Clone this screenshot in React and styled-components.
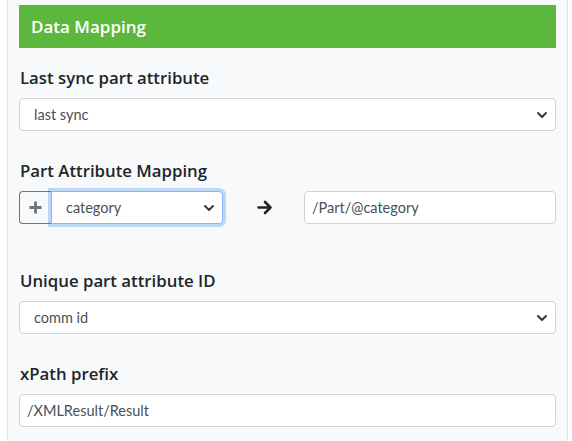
import React from 'react'
import styled, { createGlobalStyle } from 'styled-components'

const GlobalStyle = createGlobalStyle`
body {
  margin: 0;
  background: #ffffff;
  font-family: Lato, "Noto Sans", sans-serif;
  color: #212529;
}
`;

const Card = styled.div`
margin: -1px 0 0 7px;
width: 561px;
min-height: 460px;
box-sizing: border-box;
padding: 5px 11px 0 11px;
background: #f8f9fa;
border: 1px solid #dee2e6;
`;

const Header = styled.div`
height: 43px;
background: #5cb83d;
color: #ffffff;
display: flex;
align-items: center;
padding: 0 12px;
font-family: "Open Sans", sans-serif;
font-size: 17px;
font-weight: 600;
margin-bottom: 18px;
`;

const Group = styled.div`
margin-bottom: ${props => props.gap || 28}px;
`;

const Label = styled.div`
font-family: "Open Sans", sans-serif;
font-size: 16.8px;
font-weight: 600;
line-height: 24px;
margin-bottom: 8px;
padding-left: 1px;
`;

const SelectBox = styled.div`
position: relative;
height: 33px;
box-sizing: border-box;
display: flex;
align-items: center;
padding: 0 14px;
background: #ffffff;
border: 1px solid ${props => props.focused ? '#86b7fe' : '#ced4da'};
border-radius: ${props => props.joined ? '0 4px 4px 0' : '4px'};
box-shadow: ${props => props.focused ? '0 0 0 3px rgba(13,110,253,0.25)' : 'none'};
font-size: 14.5px;
color: #495057;
flex: 1;
`;

const Chevron = styled.svg`
position: absolute;
right: 7px;
top: 50%;
margin-top: -5px;
`;

const TextInput = styled.div`
height: 33px;
box-sizing: border-box;
display: flex;
align-items: center;
padding: 0 7px;
background: #ffffff;
border: 1px solid #ced4da;
border-radius: 4px;
font-size: 14.5px;
color: #495057;
`;

const MapRow = styled.div`
display: grid;
grid-template-columns: 204px 1fr 252px;
align-items: center;
`;

const InputGroup = styled.div`
display: flex;
height: 33px;
`;

const AddButton = styled.div`
width: 32px;
box-sizing: border-box;
display: flex;
align-items: center;
justify-content: center;
border: 1px solid #6c757d;
border-right: none;
border-radius: 4px 0 0 4px;
`;

const ArrowCell = styled.div`
display: flex;
justify-content: center;
padding-left: 2px;
`;

function Select({ value, focused, joined }) {
    return (
        <SelectBox focused={focused} joined={joined}>
            {value}
            <Chevron width="12" height="10" viewBox="0 0 12 10">
                <path d="M2 3 L6 7 L10 3" fill="none" stroke="#343a40" strokeWidth="2" strokeLinecap="round" strokeLinejoin="round" />
            </Chevron>
        </SelectBox>
    )
}

export default function App() {
    return (
        <>
            <GlobalStyle />
            <Card>
                <Header>Data Mapping</Header>
                <Group>
                    <Label>Last sync part attribute</Label>
                    <Select value="last sync" />
                </Group>
                <Group gap={45}>
                    <Label>Part Attribute Mapping</Label>
                    <MapRow>
                        <InputGroup>
                            <AddButton>
                                <svg width="15" height="15" viewBox="0 0 15 15">
                                    <path d="M7.5 1.5 V13.5 M1.5 7.5 H13.5" stroke="#6c757d" strokeWidth="2.8" />
                                </svg>
                            </AddButton>
                            <Select value="category" focused joined />
                        </InputGroup>
                        <ArrowCell>
                            <svg width="16" height="15" viewBox="0 0 16 15">
                                <path d="M1.5 7.5 H13.5 M8 2 L13.5 7.5 L8 13" fill="none" stroke="#212529" strokeWidth="2.6" strokeLinecap="round" strokeLinejoin="round" />
                            </svg>
                        </ArrowCell>
                        <TextInput>/Part/@category</TextInput>
                    </MapRow>
                </Group>
                <Group>
                    <Label>Unique part attribute ID</Label>
                    <Select value="comm id" />
                </Group>
                <Group>
                    <Label>xPath prefix</Label>
                    <TextInput>/XMLResult/Result</TextInput>
                </Group>
            </Card>
        </>
    )
}
